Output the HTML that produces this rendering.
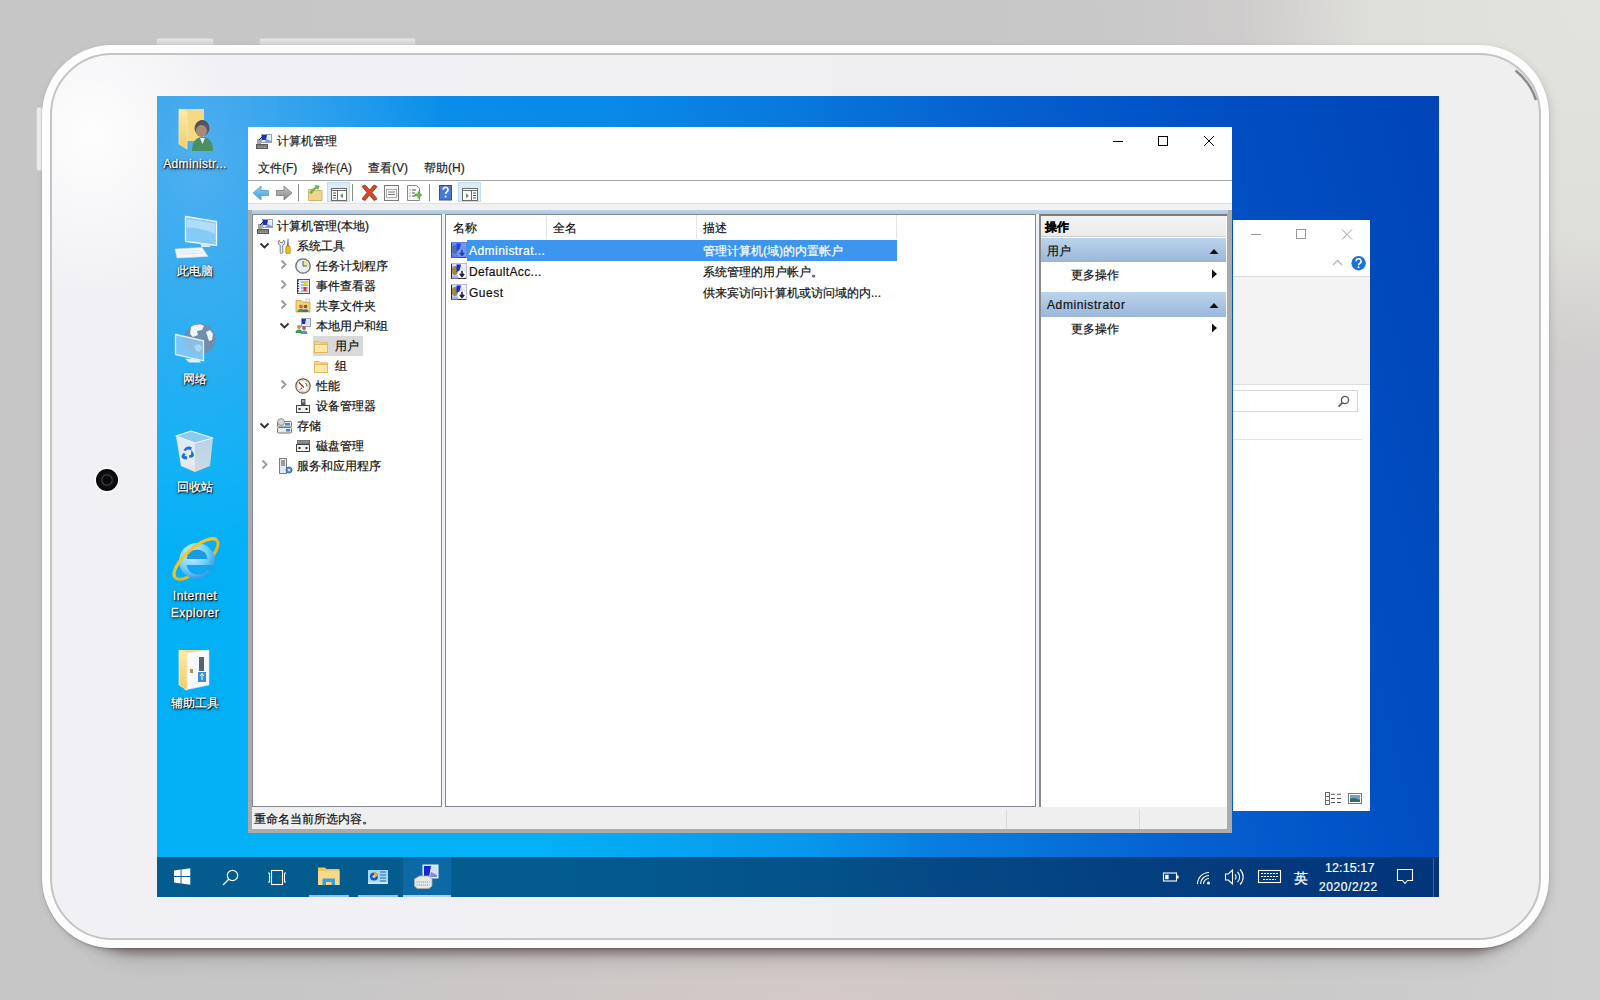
<!DOCTYPE html>
<html><head><meta charset="utf-8">
<style>
*{box-sizing:border-box;margin:0;padding:0}
html,body{width:1600px;height:1000px;overflow:hidden}
body{position:relative;font-family:"Liberation Sans",sans-serif;font-size:12px;color:#000;
background:radial-gradient(ellipse 520px 520px at 1600px 0px,rgba(226,226,222,1) 0%,rgba(224,224,220,.9) 45%,rgba(210,205,205,.5) 70%,rgba(200,200,200,0) 100%),linear-gradient(90deg,#c6c6c6 0%,#c7c7c7 60%,#cacaca 80%,#cfcfcf 100%)}
.a{position:absolute}
#bgb{left:0;top:880px;width:1600px;height:120px;background:radial-gradient(ellipse 520px 110px at 820px 120px,rgba(214,202,200,.9),rgba(214,202,200,0))}
#shadow{left:70px;top:880px;width:1460px;height:66px;border-radius:0 0 80px 80px;box-shadow:0 8px 10px rgba(70,50,50,.42),0 14px 20px rgba(70,50,50,.15)}
#btn1{left:156px;top:38px;width:58px;height:10px;border-radius:3px;background:linear-gradient(#e8e8e8,#d6d6d6 60%,#c4c4c4);box-shadow:inset 0 0 0 .6px #c4c4c4}
#btn2{left:259px;top:38px;width:157px;height:10px;border-radius:3px;background:linear-gradient(#e8e8e8,#d6d6d6 60%,#c4c4c4);box-shadow:inset 0 0 0 .6px #c4c4c4}
#btn3{left:36px;top:107px;width:10px;height:64px;border-radius:3px;background:linear-gradient(90deg,#e6e6e6,#f2f2f2 40%,#cfcfcf 80%,#bdbdbd);box-shadow:inset 0 0 0 .6px #c4c4c4}
#frame{left:42px;top:45px;width:1507px;height:903px;border-radius:70px;background:#fdfdfd;box-shadow:0 1px 2px rgba(0,0,0,.2),2px 3px 8px rgba(0,0,0,.12)}
#frin{left:50px;top:53px;width:1491px;height:887px;border-radius:62px;border:2px solid #c4c4c4;background:radial-gradient(ellipse 140px 160px at 40px 80px,rgba(255,255,255,.9),rgba(255,255,255,0)),linear-gradient(90deg,#f1f0f4,#f0eff2 50%,#efefef)}
#cam{left:96px;top:469px;width:22px;height:22px;border-radius:50%;background:radial-gradient(circle at 50% 50%,#08080c 0,#0a0a10 4px,#3a3a40 5px,#101014 6.5px,#050508 11px);box-shadow:0 0 0 1.5px rgba(255,255,255,.9)}
#screen{left:157px;top:96px;width:1282px;height:801px;overflow:hidden;
background:
 radial-gradient(ellipse 250px 400px at 40px 60px,rgba(110,185,240,.7),rgba(110,185,240,0)),
 radial-gradient(ellipse 780px 900px at 0px 801px,rgba(3,176,246,1) 0%,rgba(3,176,246,1) 50%,rgba(3,176,246,0) 100%),
 linear-gradient(75deg,#0a8ce8 0%,#0a8ae8 44%,#0878dc 57%,#0660d0 70%,#0050c4 84%,#0044b8 100%)}
.ui{font-family:"Liberation Sans",sans-serif}
/* taskbar */
#tb{left:0;top:761px;width:1282px;height:40px;background:rgba(4,36,72,.6)}
/* main window */

#win{left:248px;top:127px;width:984px;height:706px;background:#ababab;overflow:hidden}
.dl{position:absolute;text-align:center;color:#fff;font-size:12px;line-height:14px;-webkit-text-stroke:.3px #fff;text-shadow:0 0 1px #000,1px 1px 1px #000,0 1px 3px rgba(0,0,0,.9)}
.t{position:absolute;white-space:nowrap;font-size:12px;line-height:14px;-webkit-text-stroke:.2px currentColor}

</style></head><body>
<div class="a" id="bgb"></div>
<div class="a" id="shadow"></div>
<div class="a" id="btn1"></div>
<div class="a" id="btn2"></div>
<div class="a" id="btn3"></div>
<div class="a" id="frame"></div>
<div class="a" id="frin"></div>
<div class="a" id="cam"></div>
<svg class="a" style="left:1470px;top:50px" width="80" height="80" viewBox="0 0 80 80"><path d="M45.5 20.5A62 62 0 0 1 66 50" fill="none" stroke="#8c8c8c" stroke-width="2.6"/></svg>
<div class="a" id="screen">
  <div class="a" id="tb"></div>
  </div>
<div class="a" id="win"></div>
<!--MAIN--><!-- title bar + menu + toolbar -->
<div class="a" style="left:248px;top:127px;width:984px;height:54px;background:#fff"></div>
<div class="a" style="left:248px;top:180px;width:984px;height:1px;background:#a8a8a8"></div>
<div class="a" style="left:248px;top:181px;width:984px;height:22px;background:#fff"></div>
<div class="a" style="left:248px;top:203px;width:984px;height:1px;background:#e2e2e2"></div>
<div class="a" style="left:248px;top:204px;width:984px;height:6px;background:#f1f1f1"></div>
<div class="a" style="left:252px;top:210px;width:976px;height:4px;background:linear-gradient(#bcd3ea,#aec6e0)"></div>
<div class="t" style="left:277px;top:134px;color:#222">计算机管理</div>
<div class="t" style="left:258px;top:161px;color:#222">文件(F)</div>
<div class="t" style="left:312px;top:161px;color:#222">操作(A)</div>
<div class="t" style="left:368px;top:161px;color:#222">查看(V)</div>
<div class="t" style="left:424px;top:161px;color:#222">帮助(H)</div>
<!-- caption buttons -->
<svg class="a" style="left:1100px;top:127px" width="132" height="28" viewBox="0 0 132 28">
 <path d="M13 14.5h10" stroke="#000" stroke-width="1"/>
 <rect x="58.5" y="9.5" width="9" height="9" fill="none" stroke="#000" stroke-width="1"/>
 <path d="M104 9l10 10M114 9l-10 10" stroke="#000" stroke-width="1"/>
</svg>
<!-- panes -->
<div class="a" style="left:252px;top:214px;width:190px;height:593px;background:#fff;border:1px solid #828790"></div>
<div class="a" style="left:442px;top:214px;width:3px;height:593px;background:#eef1f6"></div>
<div class="a" style="left:445px;top:214px;width:591px;height:593px;background:#fff;border:1px solid #828790"></div>
<div class="a" style="left:1036px;top:214px;width:3px;height:593px;background:#eef1f6"></div>
<div class="a" style="left:1039px;top:214px;width:188px;height:593px;background:#fff;border-left:2px solid #8a8a8a;border-top:2px solid #7d7d7d"></div>
<!-- status bar -->
<div class="a" style="left:252px;top:807px;width:975px;height:22px;background:#efeff0"></div>
<div class="a" style="left:1006px;top:809px;width:1px;height:20px;background:#dadada"></div>
<div class="a" style="left:1139px;top:809px;width:1px;height:20px;background:#dadada"></div>
<div class="t" style="left:254px;top:812px;color:#111">重命名当前所选内容。</div>
<!-- tree -->
<div class="a" style="left:313px;top:336px;width:50px;height:20px;background:#d9d9d9"></div>
<div class="t" style="left:277px;top:219px;color:#111">计算机管理(本地)</div>
<div class="t" style="left:297px;top:239px;color:#111">系统工具</div>
<div class="t" style="left:316px;top:259px;color:#111">任务计划程序</div>
<div class="t" style="left:316px;top:279px;color:#111">事件查看器</div>
<div class="t" style="left:316px;top:299px;color:#111">共享文件夹</div>
<div class="t" style="left:316px;top:319px;color:#111">本地用户和组</div>
<div class="t" style="left:335px;top:339px;color:#111">用户</div>
<div class="t" style="left:335px;top:359px;color:#111">组</div>
<div class="t" style="left:316px;top:379px;color:#111">性能</div>
<div class="t" style="left:316px;top:399px;color:#111">设备管理器</div>
<div class="t" style="left:297px;top:419px;color:#111">存储</div>
<div class="t" style="left:316px;top:439px;color:#111">磁盘管理</div>
<div class="t" style="left:297px;top:459px;color:#111">服务和应用程序</div>
<!-- chevrons -->
<svg class="a" style="left:252px;top:214px" width="190" height="270" viewBox="0 0 190 270">
 <g fill="none" stroke-width="1.8">
 <path d="M8.5 29.5l4 4 4-4" stroke="#303030"/>
 <path d="M29.5 46.5l4 4-4 4" stroke="#9a9a9a"/>
 <path d="M29.5 66.5l4 4-4 4" stroke="#9a9a9a"/>
 <path d="M29.5 86.5l4 4-4 4" stroke="#9a9a9a"/>
 <path d="M28.5 109.5l4 4 4-4" stroke="#303030"/>
 <path d="M29.5 166.5l4 4-4 4" stroke="#9a9a9a"/>
 <path d="M8.5 209.5l4 4 4-4" stroke="#303030"/>
 <path d="M10.5 246.5l4 4-4 4" stroke="#9a9a9a"/>
 </g>
</svg>
<!-- list -->
<div class="a" style="left:546px;top:215px;width:1px;height:24px;background:#e5e5e5"></div>
<div class="a" style="left:696px;top:215px;width:1px;height:24px;background:#e5e5e5"></div>
<div class="a" style="left:896px;top:215px;width:1px;height:24px;background:#e5e5e5"></div>
<div class="t" style="left:453px;top:221px;color:#111">名称</div>
<div class="t" style="left:553px;top:221px;color:#111">全名</div>
<div class="t" style="left:703px;top:221px;color:#111">描述</div>
<div class="a" style="left:467px;top:240px;width:430px;height:21px;background:#3c96f0"></div>
<div class="t" style="left:469px;top:244px;color:#fff;letter-spacing:.45px">Administrat...</div>
<div class="t" style="left:703px;top:244px;color:#fff">管理计算机(域)的内置帐户</div>
<div class="t" style="left:469px;top:265px;color:#111;letter-spacing:.35px">DefaultAcc...</div>
<div class="t" style="left:703px;top:265px;color:#111">系统管理的用户帐户。</div>
<div class="t" style="left:469px;top:286px;color:#111;letter-spacing:.5px">Guest</div>
<div class="t" style="left:703px;top:286px;color:#111">供来宾访问计算机或访问域的内...</div>
<!-- action pane -->
<div class="a" style="left:1041px;top:216px;width:185px;height:20px;background:linear-gradient(#f3f3f3,#ebebeb)"></div>
<div class="a" style="left:1041px;top:236px;width:185px;height:1px;background:#cfcfcf"></div>
<div class="a" style="left:1041px;top:238px;width:185px;height:24px;background:linear-gradient(#bcd4ec,#9ab6da)"></div>
<div class="a" style="left:1041px;top:292px;width:185px;height:25px;background:linear-gradient(#bcd4ec,#9ab6da)"></div>
<div class="t" style="left:1045px;top:220px;color:#000;font-weight:bold">操作</div>
<div class="t" style="left:1047px;top:244px;color:#111">用户</div>
<div class="t" style="left:1071px;top:268px;color:#111">更多操作</div>
<div class="t" style="left:1047px;top:298px;color:#111;letter-spacing:.6px">Administrator</div>
<div class="t" style="left:1071px;top:322px;color:#111">更多操作</div>
<svg class="a" style="left:1200px;top:240px" width="26" height="100" viewBox="0 0 26 100">
 <path d="M9.5 14h9l-4.5-5z" fill="#111"/>
 <path d="M12 29.5v9l5-4.5z" fill="#111"/>
 <path d="M9.5 68h9l-4.5-5z" fill="#111"/>
 <path d="M12 83.5v9l5-4.5z" fill="#111"/>
</svg>
<!-- background window -->
<div class="a" style="left:1233px;top:220px;width:137px;height:591px;background:#fff"></div>
<svg class="a" style="left:1233px;top:220px" width="137" height="60" viewBox="0 0 137 60">
 <path d="M18 14.5h10" stroke="#9a9a9a" stroke-width="1"/>
 <rect x="63.5" y="9.5" width="9" height="9" fill="none" stroke="#9a9a9a" stroke-width="1"/>
 <path d="M109 9.5l10 10M119 9.5l-10 10" stroke="#9a9a9a" stroke-width="1"/>
 <path d="M100 45l4.5-4.5 4.5 4.5" fill="none" stroke="#b4b4b4" stroke-width="1.3"/>
 <circle cx="125.6" cy="43.2" r="7.2" fill="#1b74d4"/>
 <path d="M123.1 41.2a2.5 2.5 0 1 1 3.6 2.2c-.9.5-1.1 1-1.1 1.9" fill="none" stroke="#fff" stroke-width="1.5"/>
 <circle cx="125.6" cy="47.3" r=".95" fill="#fff"/>
</svg>
<div class="a" style="left:1233px;top:276px;width:137px;height:1px;background:#dcdcdc"></div>
<div class="a" style="left:1233px;top:277px;width:137px;height:107px;background:#f3f3f3"></div>
<div class="a" style="left:1233px;top:384px;width:137px;height:1px;background:#dedede"></div>
<div class="a" style="left:1233px;top:390px;width:125px;height:22px;border:1px solid #d6d6d6;border-left:none;background:#fff"></div>
<svg class="a" style="left:1336px;top:394px" width="16" height="16" viewBox="0 0 16 16">
 <circle cx="9" cy="6" r="3.6" fill="none" stroke="#555" stroke-width="1.3"/>
 <path d="M6.5 8.6L2.6 12.6" stroke="#555" stroke-width="1.6"/>
</svg>
<div class="a" style="left:1233px;top:439px;width:129px;height:1px;background:#e6e6e6"></div>
<svg class="a" style="left:1324px;top:790px" width="40" height="16" viewBox="0 0 40 16">
 <rect x="1.5" y="2.5" width="4" height="12" fill="#fff" stroke="#6a6a6a" stroke-width="1"/>
 <path d="M1.5 6.5h4M1.5 10.5h4" stroke="#6a6a6a" stroke-width="1"/>
 <path d="M7 4.3h4M13 4.3h4M7 8.5h4M13 8.5h4M7 12.5h4M13 12.5h4" stroke="#555" stroke-width="1.1"/>
 <rect x="24.5" y="3.5" width="13" height="10" fill="#fff" stroke="#777" stroke-width="1"/>
 <rect x="26" y="5" width="10" height="7" fill="#6fa0c8"/>
 <path d="M26 9c3-2 6-1 10 1v2H26z" fill="#3a6a60"/>
</svg>
<!-- taskbar icons -->
<svg class="a" style="left:157px;top:857px" width="1282" height="40" viewBox="0 0 1282 40">
 <rect x="246" y="0" width="48" height="40" fill="rgba(40,140,235,.28)"/>
 <rect x="152" y="38" width="40" height="2" fill="#8fc3ea"/>
 <rect x="201" y="38" width="40" height="2" fill="#8fc3ea"/>
 <rect x="246" y="38" width="48" height="2" fill="#a9d3f2"/>
 <!-- win logo -->
 <path d="M17 13.4l6.6-.9v6.5H17zM24.5 12.4l8.8-1.2v7.8h-8.8zM17 19.9h6.6v6.5L17 25.5zM24.5 19.9h8.8v7.8l-8.8-1.2z" fill="#fff"/>
 <!-- search -->
 <circle cx="75.5" cy="18.5" r="5.2" fill="none" stroke="#fff" stroke-width="1.2"/>
 <path d="M71.8 22.2L66 28" stroke="#fff" stroke-width="1.3"/>
 <!-- task view -->
 <rect x="114.5" y="13.5" width="11" height="14" fill="none" stroke="#fff" stroke-width="1.1"/>
 <path d="M112.5 16v9h-1.5M127.5 16v9h1.5" fill="none" stroke="#fff" stroke-width="1.1"/>
 <path d="M111 16h1.5M127.5 16h1.5" stroke="#fff" stroke-width="1.1"/>
</svg>
<!-- tray -->
<svg class="a" style="left:1150px;top:857px" width="290" height="40" viewBox="0 0 290 40">
 <rect x="13.5" y="16" width="13" height="8" fill="none" stroke="#fff" stroke-width="1.1"/>
 <rect x="27" y="18.5" width="1.6" height="3" fill="#fff"/>
 <rect x="15.2" y="17.8" width="3.4" height="4.4" fill="#fff"/>
 <g fill="none" stroke="#fff" stroke-width="1.1">
  <path d="M47.5 27a11.5 11.5 0 0 1 11.5-11.5"/><path d="M50.5 27a8.5 8.5 0 0 1 8.5-8.5"/><path d="M53.5 27a5.5 5.5 0 0 1 5.5-5.5"/>
 </g>
 <circle cx="58.5" cy="26" r="1.5" fill="#fff"/>
 <path d="M75.5 17h2.8l4.2-4v14l-4.2-4h-2.8z" fill="none" stroke="#fff" stroke-width="1.1"/>
 <path d="M85 17.5a3.5 3.5 0 0 1 0 5M87.5 15a7 7 0 0 1 0 10M90 12.5a10.5 10.5 0 0 1 0 15" fill="none" stroke="#fff" stroke-width="1.1"/>
 <rect x="108.5" y="13.5" width="22" height="12" fill="none" stroke="#fff" stroke-width="1.1"/>
 <path d="M111 16.5h17M111 19.5h17M113 22.5h13" stroke="#fff" stroke-width="1" stroke-dasharray="2.2 .8"/>
 <path d="M247.5 12.5h15v11h-5l-2.5 3-2.5-3h-5z" fill="none" stroke="#fff" stroke-width="1.1"/>
 <rect x="283" y="1" width="1" height="39" fill="rgba(255,255,255,.25)"/>
</svg>
<div class="t" style="left:1294px;top:870px;color:#fff;font-size:14px;line-height:16px">英</div>
<div class="t" style="left:1325px;top:861px;color:#fff;font-size:12.5px;line-height:14px;letter-spacing:.1px">12:15:17</div>
<div class="t" style="left:1319px;top:880px;color:#fff;font-size:12px;line-height:14px;letter-spacing:.6px">2020/2/22</div>
<svg width="0" height="0" style="position:absolute">
 <defs>
  <linearGradient id="gFold" x1="0" y1="0" x2="0" y2="1"><stop offset="0" stop-color="#fbe6a6"/><stop offset="1" stop-color="#f0c75a"/></linearGradient>
  <linearGradient id="gScr" x1="0" y1="0" x2="1" y2="1"><stop offset="0" stop-color="#1a28c0"/><stop offset=".45" stop-color="#2a44d8"/><stop offset=".5" stop-color="#b9c8f0"/><stop offset="1" stop-color="#dfe6f8"/></linearGradient>
  <linearGradient id="gBar" x1="0" y1="0" x2="0" y2="1"><stop offset="0" stop-color="#bcd4ec"/><stop offset="1" stop-color="#98b4d9"/></linearGradient>
  <symbol id="iComp" viewBox="0 0 16 16">
   <rect x="5.5" y="1.5" width="10" height="8" fill="#e6ecf8" stroke="#8fa3c4"/>
   <path d="M6 2h5l-1 5h-4z" fill="#1d2fc4"/>
   <path d="M10 6l5 2v1h-6z" fill="#7d93dc"/>
   <rect x="1" y="6" width="4" height="5" fill="#a0a8b0"/>
   <path d="M3 7l3-3" stroke="#222" stroke-width="1"/>
   <rect x="0.5" y="11.5" width="11" height="4" fill="#737373" stroke="#5a5a5a"/>
   <path d="M1.5 13h9M1.5 14.5h9" stroke="#c8c8c8" stroke-width=".6" stroke-dasharray="1 .6"/>
  </symbol>
  <symbol id="iTools" viewBox="0 0 16 16">
   <path d="M2.2 2.2C.8 3.5 1 6 2.6 7l.6.4v6.8a1.3 1.3 0 0 0 2.6 0V7.4l.6-.4C8 6 8.2 3.5 6.8 2.2L5.6 4.6H3.4z" fill="#e4e8ee" stroke="#6e7680" stroke-width=".9"/>
   <path d="M10.6 1l.8-.2.2 7.2h-1.4z" fill="#4a4a4a"/>
   <path d="M9.4 8h3.2l.6 2.2v4a2.2 2.2 0 0 1-4.4 0v-4z" fill="#f0bc1c" stroke="#a87800" stroke-width=".7"/>
  </symbol>
  <symbol id="iClock" viewBox="0 0 16 16">
   <circle cx="8" cy="8" r="7.2" fill="#dfe4ea" stroke="#6a6e74" stroke-width="1.3"/>
   <circle cx="8" cy="8" r="5.8" fill="#eef3fb"/>
   <path d="M8 2.2A5.8 5.8 0 0 1 13.8 8H8z" fill="#f0e49a"/>
   <path d="M8 3v5h4" fill="none" stroke="#4a4a4a" stroke-width=".9"/>
  </symbol>
  <symbol id="iEvent" viewBox="0 0 16 16">
   <rect x="2.5" y="1.5" width="12" height="14" fill="#e8eef8" stroke="#3a5a98"/>
   <path d="M2 3h2M2 5.5h2M2 8h2M2 10.5h2M2 13h2" stroke="#223" stroke-width="1"/>
   <path d="M6 4h7M6 7h7M6 10h7M6 13h7" stroke="#6a8ac8" stroke-width="1"/>
   <rect x="8.5" y="3" width="3" height="4" fill="#f2d000"/>
   <rect x="8.5" y="9" width="3" height="4" fill="#d83a3a"/>
  </symbol>
  <symbol id="iShare" viewBox="0 0 16 16">
   <path d="M1 2.5h5l1 1.5h8v10H1z" fill="#f4d27a" stroke="#c9a040" stroke-width=".8"/>
   <rect x="11" y="1" width="3.5" height="3" fill="#fff" stroke="#b0b0b0" stroke-width=".6"/>
   <circle cx="6" cy="8.5" r="2" fill="#c07050"/>
   <path d="M2.5 14a3.5 3 0 0 1 7 0z" fill="#3a9a4a"/>
   <circle cx="10.5" cy="8.5" r="1.8" fill="#905030"/>
   <path d="M7.5 14a3 2.8 0 0 1 6 0z" fill="#3070c0"/>
  </symbol>
  <symbol id="iUsers" viewBox="0 0 16 16">
   <rect x="6.5" y="0.5" width="9" height="8" fill="#dfe6f8" stroke="#8fa3c4"/>
   <path d="M7 1h4l-1 5H7z" fill="#1d2fc4"/>
   <circle cx="4" cy="9" r="2" fill="#c49060"/>
   <path d="M0.5 15a3.5 3.5 0 0 1 7 0z" fill="#3a9a4a"/>
   <circle cx="9" cy="10" r="2" fill="#a07050"/>
   <path d="M5.5 16a3.5 3.5 0 0 1 7 0z" fill="#5a8ad0"/>
  </symbol>
  <symbol id="iFolder" viewBox="0 0 16 16">
   <path d="M1.5 3.5h4.5l1.2 1.3h7.3v9.7h-13z" fill="#f6d77e" stroke="#d9b354" stroke-width=".8"/>
   <path d="M1.5 6.5h13v8h-13z" fill="#fbe7a8" stroke="#d9b354" stroke-width=".8"/>
  </symbol>
  <symbol id="iPerf" viewBox="0 0 16 16">
   <circle cx="8" cy="8" r="7.2" fill="#f3ead8" stroke="#6b5d4a" stroke-width="1.2"/>
   <circle cx="8" cy="8" r="5.6" fill="#fff" stroke="#d0c4a8" stroke-width=".6"/>
   <path d="M4 4.5l5 5" stroke="#cc2020" stroke-width="1.5"/>
   <path d="M10.5 5c1 1 1.5 2 1.4 3.5" stroke="#333" stroke-width="1" fill="none"/>
   <path d="M5 11.5c.5-.8 1.2-1.3 2-1.5" stroke="#333" stroke-width="1" fill="none"/>
  </symbol>
  <symbol id="iDev" viewBox="0 0 16 16">
   <rect x="6" y="1" width="4.5" height="6" fill="#555"/>
   <rect x="7" y="2" width="2.5" height="2.5" fill="#aaa"/>
   <rect x="1.5" y="7.5" width="13" height="7" fill="#f2f2f2" stroke="#444" stroke-width="1"/>
   <rect x="3.5" y="10" width="2" height="2" fill="#333"/>
   <rect x="10.5" y="10" width="2" height="2" fill="#333"/>
  </symbol>
  <symbol id="iStor" viewBox="0 0 16 16">
   <rect x="1.5" y="9.5" width="14" height="5.5" rx="1" fill="#e8e8e8" stroke="#777"/>
   <rect x="10" y="11" width="4" height="2.5" fill="#3a90d0"/>
   <rect x="1.5" y="3.5" width="14" height="5.5" rx="1" fill="#e8e8e8" stroke="#777"/>
   <circle cx="5" cy="4" r="3.5" fill="#cfd6dc" stroke="#778" stroke-width=".7"/>
   <rect x="9" y="5" width="5" height="2.5" fill="#3a90d0"/>
  </symbol>
  <symbol id="iDisk" viewBox="0 0 16 16">
   <rect x="2" y="2" width="13" height="4" fill="#6e6e6e"/>
   <path d="M3 3.3h11M3 4.8h11" stroke="#ddd" stroke-width=".6" stroke-dasharray="1 .6"/>
   <rect x="1.5" y="6.5" width="13" height="7" fill="#f2f2f2" stroke="#444"/>
   <rect x="3.5" y="9" width="2" height="2" fill="#333"/>
   <rect x="10.5" y="9" width="2" height="2" fill="#333"/>
  </symbol>
  <symbol id="iServ" viewBox="0 0 16 16">
   <rect x="2.5" y="0.5" width="7" height="15" fill="#e4e6ea" stroke="#7a7f86"/>
   <path d="M4 3h4M4 5h4M4 7h4" stroke="#555" stroke-width="1"/>
   <circle cx="12" cy="12" r="3" fill="#5a9ad8" stroke="#2a5a98" stroke-width=".8"/>
   <circle cx="12" cy="12" r="1" fill="#fff"/>
  </symbol>
  <symbol id="iUser" viewBox="0 0 16 16">
   <rect x="0.5" y="0.5" width="15" height="15" fill="#d9ddf2" stroke="#b8bccc" stroke-width="1"/>
   <path d="M.5 1v14.5H15" fill="none" stroke="#2a2a3a" stroke-width="1"/>
   <path d="M9 1h6v6c-2-1-4-3-6-6z" fill="#eef0f8"/>
   <ellipse cx="3.8" cy="7.5" rx="3" ry="4.5" fill="#9c8a4c"/>
   <path d="M5.5 1.5h4.5l-1.5 6-3 1.5z" fill="#1a2ad0"/>
   <path d="M1 12.5h6v3H1z" fill="#a8b4e4"/>
   <circle cx="11" cy="11" r="4.3" fill="#fff"/>
   <path d="M11 7.8v5M8.8 10.8l2.2 2.6 2.2-2.6" fill="none" stroke="#1e1e3c" stroke-width="1.6"/>
  </symbol>
 </defs>
</svg>
<!-- title icon -->
<svg class="a" style="left:256px;top:133px" width="16" height="16"><use href="#iComp"/></svg>
<!-- tree icons -->
<svg class="a" style="left:257px;top:218px" width="16" height="16"><use href="#iComp"/></svg>
<svg class="a" style="left:277px;top:238px" width="16" height="16"><use href="#iTools"/></svg>
<svg class="a" style="left:295px;top:258px" width="16" height="16"><use href="#iClock"/></svg>
<svg class="a" style="left:295px;top:278px" width="16" height="16"><use href="#iEvent"/></svg>
<svg class="a" style="left:295px;top:298px" width="16" height="16"><use href="#iShare"/></svg>
<svg class="a" style="left:295px;top:318px" width="16" height="16"><use href="#iUsers"/></svg>
<svg class="a" style="left:313px;top:338px" width="16" height="16"><use href="#iFolder"/></svg>
<svg class="a" style="left:313px;top:358px" width="16" height="16"><use href="#iFolder"/></svg>
<svg class="a" style="left:295px;top:378px" width="16" height="16"><use href="#iPerf"/></svg>
<svg class="a" style="left:295px;top:398px" width="16" height="16"><use href="#iDev"/></svg>
<svg class="a" style="left:276px;top:418px" width="16" height="16"><use href="#iStor"/></svg>
<svg class="a" style="left:295px;top:438px" width="16" height="16"><use href="#iDisk"/></svg>
<svg class="a" style="left:277px;top:458px" width="16" height="16"><use href="#iServ"/></svg>
<!-- list icons -->
<svg class="a" style="left:451px;top:242px" width="16" height="16"><use href="#iUser"/></svg>
<div class="a" style="left:451px;top:242px;width:16px;height:16px;background:rgba(30,90,240,.6)"></div>
<svg class="a" style="left:451px;top:263px" width="16" height="16"><use href="#iUser"/></svg>
<svg class="a" style="left:451px;top:284px" width="16" height="16"><use href="#iUser"/></svg>
<!-- toolbar -->
<div class="a" style="left:327px;top:182px;width:23px;height:20px;background:#dcebf9;border:1px solid #c2daf2"></div>
<div class="a" style="left:458px;top:182px;width:23px;height:20px;background:#dcebf9;border:1px solid #c2daf2"></div>
<svg class="a" style="left:248px;top:181px" width="240" height="22" viewBox="0 0 240 22">
 <defs>
  <linearGradient id="gBk" x1="0" y1="0" x2="0" y2="1"><stop offset="0" stop-color="#8fd0f8"/><stop offset="1" stop-color="#3a9ee0"/></linearGradient>
  <linearGradient id="gFw" x1="0" y1="0" x2="0" y2="1"><stop offset="0" stop-color="#c4c4c4"/><stop offset="1" stop-color="#8a8a8a"/></linearGradient>
 </defs>
 <path d="M5 12l8-7v4.5h7.5v5H13V19z" fill="url(#gBk)" stroke="#5a9cc8" stroke-width=".8"/>
 <path d="M44 12l-8-7v4.5h-7.5v5H36V19z" fill="url(#gFw)" stroke="#7a7a7a" stroke-width=".8"/>
 <rect x="50" y="3" width="1" height="17" fill="#8c8c8c"/>
 <!-- up folder -->
 <path d="M60.5 8.5h4l1 1h8.5v10h-13.5z" fill="#f3d68e" stroke="#c8a458" stroke-width=".8"/>
 <path d="M62 12c1-3 3-5 6-6l-1-1.5 4 .5-1 3.5-1-1.2c-2 .8-4 2.5-5 5z" fill="#6cc048" stroke="#3a8a2a" stroke-width=".5"/>
 <!-- tree toggle icon -->
 <rect x="83.5" y="7.5" width="15" height="12" fill="#fff" stroke="#6a6a6a"/>
 <path d="M83.5 9.5h15" stroke="#6a6a6a"/>
 <path d="M89.5 10v9.5" stroke="#6a6a6a"/>
 <path d="M85 12h3M85 14.5h3M85 17h3" stroke="#555"/>
 <path d="M95 12.2l-3 2.5 3 2.5z" fill="#5aa040"/>
 <rect x="104" y="3" width="1" height="17" fill="#8c8c8c"/>
 <!-- delete -->
 <path d="M114 5.5l3-1.5 4.5 5 4.5-5 3 1.5-5 6 5 6.5-3 1.5-4.5-5.5-4.5 5.5-3-1.5 5-6.5z" fill="#d44a2a" stroke="#8a2a10" stroke-width=".8"/>
 <!-- properties -->
 <rect x="136.5" y="4.5" width="14" height="15" fill="#f6f6f6" stroke="#7a7a7a"/>
 <rect x="138.5" y="8.5" width="10" height="8" fill="#fff" stroke="#9a9a9a" stroke-width=".8"/>
 <path d="M140 11h7M140 13.5h7" stroke="#6a6a6a" stroke-width=".9"/>
 <!-- export -->
 <path d="M159.5 4.5h9l3 3v12h-12z" fill="#fafafa" stroke="#8a8a8a"/>
 <path d="M161.5 9h1M161.5 12h1M161.5 15h1M164 9h4M164 12h3M164 15h3" stroke="#555" stroke-width="1"/>
 <path d="M167 13h3v-2.5l4 3.5-4 3.5V15h-3z" fill="#6cc048" stroke="#3a8a2a" stroke-width=".5"/>
 <rect x="181" y="3" width="1" height="17" fill="#8c8c8c"/>
 <!-- help -->
 <rect x="191" y="4" width="13" height="15.5" fill="#2c4ea8"/>
 <rect x="192" y="5" width="11" height="13.5" fill="#4a78d8"/>
 <path d="M195.2 8.8a2.4 2.4 0 1 1 3.6 2c-.9.6-1.2 1.1-1.2 2.2" fill="none" stroke="#fff" stroke-width="1.6"/>
 <circle cx="197.6" cy="15.6" r="1" fill="#fff"/>
 <!-- action pane toggle -->
 <rect x="214.5" y="7.5" width="15" height="12" fill="#fff" stroke="#6a6a6a"/>
 <path d="M214.5 9.5h15" stroke="#6a6a6a"/>
 <path d="M223.5 10v9.5" stroke="#6a6a6a"/>
 <path d="M225 12h3M225 14.5h3M225 17h3" stroke="#555"/>
 <path d="M218 12.2l3 2.5-3 2.5z" fill="#5aa040"/>
</svg>
<!-- desktop icons -->
<svg class="a" style="left:160px;top:100px" width="70" height="620" viewBox="0 0 70 620">
 <defs>
  <linearGradient id="gF2" x1="0" y1="0" x2="0" y2="1"><stop offset="0" stop-color="#fdeaa8"/><stop offset="1" stop-color="#f2cc6a"/></linearGradient>
  <linearGradient id="gMon" x1="0" y1="0" x2="1" y2="1"><stop offset="0" stop-color="#d8ecfa"/><stop offset="1" stop-color="#7cc0ec"/></linearGradient>
  <radialGradient id="gGlobe" cx=".4" cy=".4" r=".7"><stop offset="0" stop-color="#e8f2fa"/><stop offset=".6" stop-color="#8fb4d4"/><stop offset="1" stop-color="#5a82a8"/></radialGradient>
  <linearGradient id="gBin" x1="0" y1="0" x2="0" y2="1"><stop offset="0" stop-color="#e8f4fc"/><stop offset="1" stop-color="#f4eee8"/></linearGradient>
  <radialGradient id="gIE" cx=".45" cy=".45" r=".6"><stop offset="0" stop-color="#c8ecfc"/><stop offset=".7" stop-color="#3cb4ec"/><stop offset="1" stop-color="#1a8ad8"/></radialGradient>
  <filter id="ts" x="-20%" y="-50%" width="140%" height="200%"><feDropShadow dx="0" dy="1" stdDeviation=".8" flood-color="#000" flood-opacity=".7"/></filter>
 </defs>
 <!-- Administrator folder -->
 <path d="M19 9h25v32H19z" fill="#f6d984"/>
 <path d="M19 9l8 3v37l-8-5z" fill="url(#gF2)" stroke="#fbeab0" stroke-width=".8"/>
 <path d="M32 51c0-9 4-14 10.5-14S53 42 53 51z" fill="#4a9060"/>
 <path d="M40 38l2.5 6 2.5-6z" fill="#eef"/>
 <circle cx="42" cy="28.5" r="7.5" fill="#5a5860"/>
 <ellipse cx="41.5" cy="31" rx="5.5" ry="6" fill="#a88a78"/>
 <path d="M35 27c1-5 4-7 7-7s6 2 7 6c-3-2-9-2-14 1z" fill="#55525a"/>
 <!-- This PC -->
 <path d="M25.5 116.5l31 5v24l-31-4z" fill="rgba(190,228,250,.55)" stroke="#eef8fe" stroke-width="1.3"/>
 <path d="M27 119l28 4.5v10c-8-3-18-6-28-6z" fill="rgba(255,255,255,.35)"/>
 <path d="M40 143l1.5 4h9l-1.5-3z" fill="#dfe8ee"/>
 <path d="M15 149l27-1.5 6 9-31 1.5z" fill="#f4f8fb" stroke="#cfdce6" stroke-width=".6"/>
 <path d="M19 151.5l22-1M20 154l23-1" stroke="#cdd8e0" stroke-width=".6"/>
 <!-- Network -->
 <circle cx="40" cy="239" r="15.5" fill="#6f8eac"/>
 <path d="M31 227c4-3 10-3 13-1l-2 4-5 1 1 4-5 2-3-3zM46 232l4-2 3 4-1 6-3 1zM34 246l5-2 3 3-2 5-4-1z" fill="#eef4fa"/>
 <path d="M15.5 234.5l28 6.3v20l-28-6.3z" fill="rgba(150,205,245,.75)" stroke="#e4f2fb" stroke-width="1.3"/>
 <path d="M25 258.5l4 4h12l-2-3z" fill="#e8eef2"/>
 <!-- Recycle bin -->
 <defs>
  <linearGradient id="gBinL" x1="0" y1="0" x2="0" y2="1"><stop offset="0" stop-color="#dfeaf4"/><stop offset=".75" stop-color="#e4ecf2"/><stop offset="1" stop-color="#f0dcd8"/></linearGradient>
  <linearGradient id="gBinR" x1="0" y1="0" x2="0" y2="1"><stop offset="0" stop-color="#bcd4e8"/><stop offset=".75" stop-color="#c4d8e6"/><stop offset="1" stop-color="#e4d4d0"/></linearGradient>
 </defs>
 <path d="M16 336L35 343V372L21 366z" fill="url(#gBinL)"/>
 <path d="M35 343L53 338L50 366L35 372z" fill="url(#gBinR)"/>
 <path d="M16 336L35 343L53 338L31 331z" fill="#8ccaf0" stroke="#eaf6fe" stroke-width="1.2" stroke-linejoin="round"/>
 <g fill="#1c6ed8">
  <path d="M23.5 350.5c1.5-3 3.5-4.5 6-4l2.5 1-1.3 2.6-2.2-.6c-1.2-.2-2 .5-2.6 1.6z"/>
  <path d="M31.5 349.5l2.2 4.2c.8 1.8-.2 3.6-2.2 3.8l-2.3.2v-2.6l1.7-.2z"/>
  <path d="M27 359.5l-3.4-.6c-1.8-.4-2.5-2.2-1.6-3.8l1.3-2.2 2.2 1.3-1 1.7 2.8.6z"/>
 </g>
 <!-- IE -->
 <defs>
  <radialGradient id="gIE2" cx=".35" cy=".3" r=".8"><stop offset="0" stop-color="#d8f4fe"/><stop offset=".55" stop-color="#70d0f8"/><stop offset="1" stop-color="#1a90dc"/></radialGradient>
 </defs>
 <g transform="rotate(-42 36 459)"><path d="M64 459a28 10.5 0 0 1 -56 0" fill="none" stroke="#e8b820" stroke-width="3"/></g>
 <circle cx="37" cy="461" r="18" fill="url(#gIE2)"/>
 <path d="M26.5 459a10.5 9.5 0 0 1 21 0z" fill="#1a9ae0"/>
 <path d="M26.5 465H56v5.5H47.5C45.5 473 42 474.5 37.5 474.5 32 474.5 28 471 26.5 465z" fill="#12a6ee"/>
 <path d="M25.5 466h24.5c-2 5-6.5 8-11.5 8-6 0-11-3.5-13-8z" fill="url(#gIE2)" opacity="0"/>
 <g transform="rotate(-42 36 459)"><path d="M8 459a28 10.5 0 0 1 56 0" fill="none" stroke="#f2c42c" stroke-width="3.2"/></g>
 <!-- Accessibility folder -->
 <path d="M19 550h25v32H19z" fill="#f6d984"/>
 <path d="M25 553l24-3v35l-24 5z" fill="#f6f9fc" stroke="#d6dfe8" stroke-width=".6"/>
 <path d="M19 550l8 3v37l-8-5z" fill="url(#gF2)" stroke="#fbeab0" stroke-width=".8"/>
 <rect x="39" y="557" width="5" height="14" fill="#5a6070"/>
 <rect x="38" y="572" width="8" height="10" fill="#3a90d0"/>
 <path d="M42 580v-6M40 576l2-2.5 2 2.5" stroke="#fff" stroke-width="1" fill="none"/>
 <rect x="30" y="569" width="3" height="4" fill="#b89050"/>
</svg>
<div class="dl" style="left:158px;top:157px;width:74px;letter-spacing:.35px">Administr...</div>
<div class="dl" style="left:158px;top:264px;width:74px">此电脑</div>
<div class="dl" style="left:158px;top:372px;width:74px">网络</div>
<div class="dl" style="left:158px;top:480px;width:74px">回收站</div>
<div class="dl" style="left:158px;top:588px;width:74px;line-height:17px;letter-spacing:.45px">Internet<br>Explorer</div>
<div class="dl" style="left:158px;top:696px;width:74px">辅助工具</div>
<!-- taskbar app icons -->
<svg class="a" style="left:300px;top:857px" width="150" height="40" viewBox="0 0 150 40">
 <path d="M18 10.5h7l1.5 1.5h13v16h-21.5z" fill="#f2c65a"/>
 <path d="M18 14h21.5v14H18z" fill="#f7d98a"/>
 <path d="M22.5 28v-6.5h12.5V28h-3.5v-3h-5.5v3z" fill="#3a9ee4"/>
 <rect x="68" y="13" width="20" height="14" fill="#a4d8f6"/>
 <circle cx="74" cy="19.5" r="4" fill="#1a58b0"/>
 <path d="M74 19.5v-4a4 4 0 0 1 4 4z" fill="#f4a020"/>
 <circle cx="74" cy="19.5" r="1.6" fill="#a4d8f6"/>
 <path d="M80 15h6M80 18h6M80 21h6M80 24h6" stroke="#1a68c0" stroke-width="1.2"/>
 <rect x="68" y="25" width="20" height="2" fill="#e8f4fc" opacity=".6"/>
 <rect x="123" y="8" width="15" height="13" fill="#d4def6" stroke="#eef2fa" stroke-width="1"/>
 <path d="M124 9h7l-2 11h-5z" fill="#1a26c8"/>
 <path d="M131 15l6 3v2h-7z" fill="#7a8ad8"/>
 <path d="M114.5 22l5-3h9l3.5 3v7l-3 2.5h-12l-2.5-2.5z" fill="#e8e8e8" stroke="#a8a8a8" stroke-width=".8"/>
 <path d="M116.5 25h13M116.5 28h13" stroke="#8a8a8a" stroke-width=".9" stroke-dasharray="1.2 .9"/>
</svg>
<!--/MAIN-->
</body></html>
